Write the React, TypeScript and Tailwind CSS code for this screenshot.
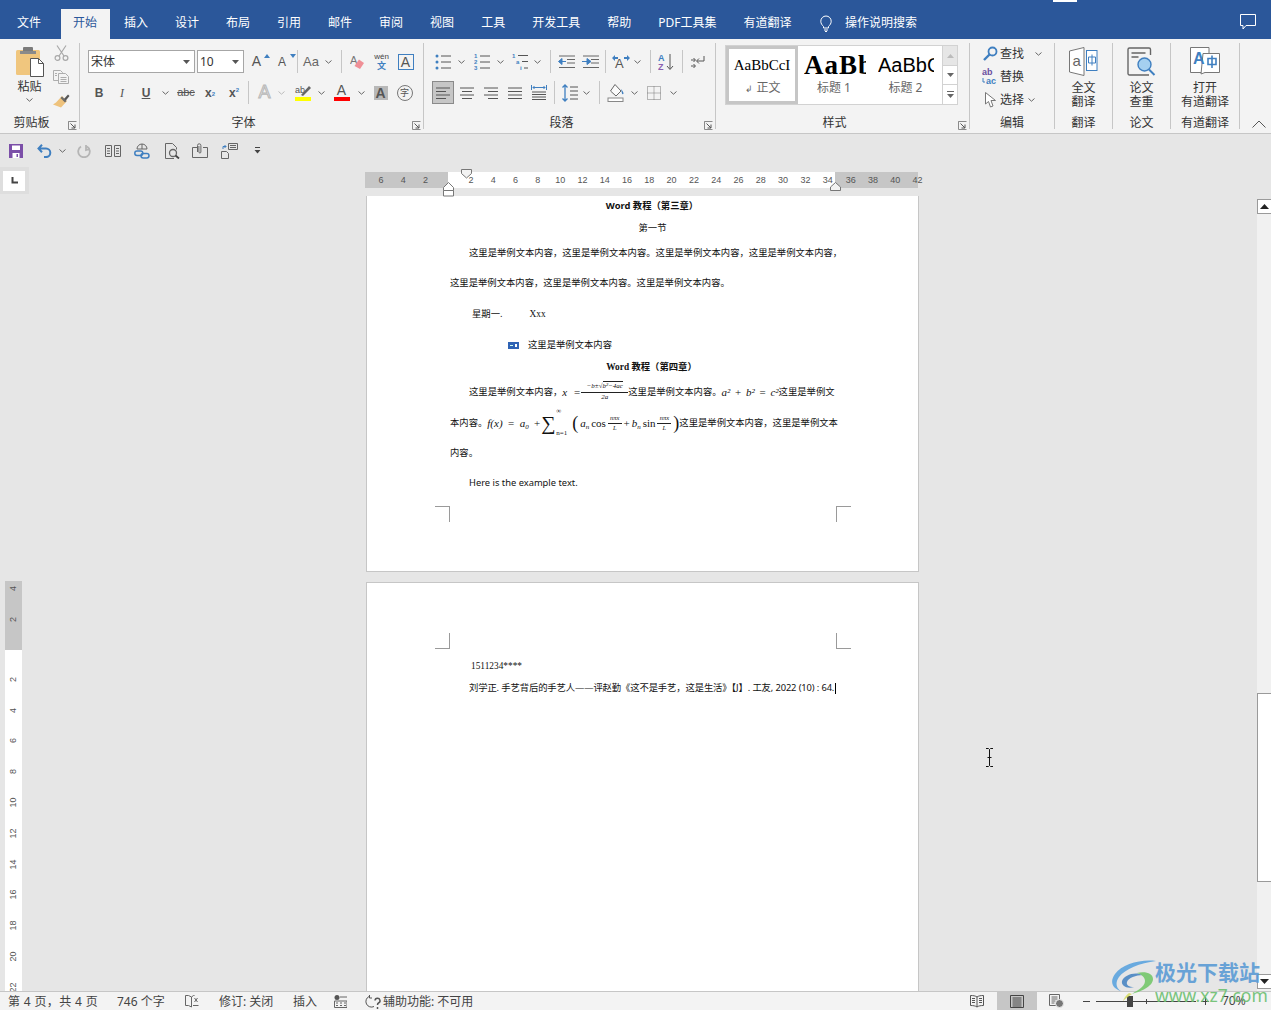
import React from "react";

const IB = "#3f7fc0";

function Chev({ w = 14, c = "#666" }: { w?: number; c?: string }) {
  return (
    <span className="flex items-center justify-center shrink-0" style={{ width: w }}>
      <svg className="shrink-0" width="7" height="4" viewBox="0 0 7 4"><path d="M.5.5 3.5 3.2 6.5.5" fill="none" stroke={c} strokeWidth="1" /></svg>
    </span>
  );
}
function Sep({ h = 23 }: { h?: number }) {
  return <span className="block w-px bg-[#c6c6c6] shrink-0" style={{ height: h }} />;
}
function Box({ w, children, className = "" }: { w: number; children?: React.ReactNode; className?: string }) {
  return <span className={"flex items-center justify-center shrink-0 h-[23px] " + className} style={{ width: w }}>{children}</span>;
}
function Launcher() {
  return (
    <svg className="absolute right-[2px] bottom-[-1px]" width="9" height="9" viewBox="0 0 9 9">
      <path d="M.5 5V.5H8.500M.5.5V8.500H8.500" fill="none" stroke="#8a8a8a" />
      <path d="M2.500 2.500 7 7M7 3.500V7H3.500" fill="none" stroke="#555" />
    </svg>
  );
}
function Group({ w, label, launcher, children }: { w: number; label: string; launcher?: boolean; children: React.ReactNode }) {
  return (
    <section className="relative flex flex-col h-[86px] border-r border-[#c6c6c6] shrink-0" style={{ width: w }}>
      <div className="flex-1 min-h-0">{children}</div>
      <div className={"h-[14px] mb-[-1px] leading-[14px] text-center text-[12px] text-[#333] " + (launcher ? "pr-[16px]" : "")}>{label}</div>
      {launcher && <Launcher />}
    </section>
  );
}
function Lines({ kind }: { kind: "l" | "c" | "r" | "j" | "d" }) {
  const rows: Record<string, string> = {
    l: "M1 3h14M1 6.500h10M1 10h14M1 13.500h10",
    c: "M1 3h14M3 6.500h10M1 10h14M3 13.500h10",
    r: "M1 3h14M5 6.500h10M1 10h14M5 13.500h10",
    j: "M1 3h14M1 6.500h14M1 10h14M1 13.500h14",
    d: "M1 7h14M1 9.500h14M1 12h14M1 14.500h14",
  };
  return (
    <svg width="16" height="16" viewBox="0 0 16 16">
      <path d={rows[kind]} stroke="#555" fill="none" />
      {kind === "d" && <path d="M.5 0v5M15.500 0v5M2 2.500h12M3.500 1 2 2.500 3.500 4M12.500 1 14 2.500 12.500 4" stroke={IB} fill="none" />}
    </svg>
  );
}

function Paste() {
  return (
    <svg width="30" height="31" viewBox="0 0 30 31">
      <rect x="1" y="4" width="24" height="25" rx="1.500" fill="#f0c67e" />
      <rect x="8" y="1" width="10" height="6" rx="1" fill="#7b7b7b" />
      <rect x="5" y="5" width="16" height="3" fill="#8a8a8a" />
      <path d="M15.500 12.500H23.500L28.500 17.500V30.500H15.500Z" fill="#fff" stroke="#555" />
      <path d="M23.500 12.500V17.500H28.500" fill="none" stroke="#555" />
    </svg>
  );
}
function Cut() {
  return (
    <svg width="15" height="16" viewBox="0 0 15 16" fill="none" stroke="#a8a8a8" strokeWidth="1.200">
      <path d="M3 .5 10 11M12 .5 5 11" />
      <circle cx="3.500" cy="13" r="2.400" /><circle cx="11.500" cy="13" r="2.400" />
    </svg>
  );
}
function CopyI() {
  return (
    <svg width="16" height="14" viewBox="0 0 16 14" fill="#f3f3f3" stroke="#adadad">
      <path d="M.5.5h7l2 2v8H.5z" /><path d="M5.500 3.500h7l3 3v7h-10z" />
      <path d="M7.500 7.500h6M7.500 9.500h6M7.500 11.500h6M2 3.500h2M2 5.500h2" />
    </svg>
  );
}
function Painter() {
  return (
    <svg width="17" height="15" viewBox="0 0 17 15">
      <path d="M9 3 14 8 8 14.500 0 11.500 3 9.500Z" fill="#eec27c" />
      <path d="M10 7 15 1.500 16.500 3 12 8.500Z" fill="#555" />
      <path d="M9 3.500 13.500 8 12 9.500 7.500 5Z" fill="#6d6d6d" />
    </svg>
  );
}
function List({ type }: { type: "b" | "n" | "m" }) {
  return (
    <svg width="16" height="18" viewBox="0 0 16 18">
      {type === "b" && (
        <g fill={IB}><circle cx="2" cy="3" r="1.500" /><circle cx="2" cy="9" r="1.500" /><circle cx="2" cy="15" r="1.500" /></g>
      )}
      {type === "n" && (
        <g fill={IB} fontSize="6" fontFamily="Liberation Sans" fontWeight="700"><text x="0" y="5">1</text><text x="0" y="11">2</text><text x="0" y="17">3</text></g>
      )}
      {type === "m" && (
        <g fill={IB} fontSize="6" fontFamily="Liberation Sans" fontWeight="700"><text x="0" y="5">1</text><text x="4" y="11">a</text><text x="8" y="17">i</text></g>
      )}
      {type === "m" ? (
        <path d="M6 2.500h10M10 8.500h6M12 15h4" stroke="#555" fill="none" />
      ) : (
        <path d="M6 3h10M6 9h10M6 15h10" stroke="#555" fill="none" />
      )}
    </svg>
  );
}
function Indent({ flip }: { flip?: boolean }) {
  return (
    <svg width="17" height="14" viewBox="0 0 17 14">
      <path d="M1 1h16M9 4.500h8M9 8h8M1 12.500h16" stroke="#666" />
      {flip ? <path d="M0 6.500h5V3.500L9 6.500 5 9.500V6.500" fill={IB} stroke={IB} /> : <path d="M8 6.500H4V3.500L0.500 6.500 4 9.500V6.500" fill={IB} stroke={IB} />}
    </svg>
  );
}
function Cursor() {
  return <svg width="7" height="19" viewBox="0 0 7 19"><path d="M0 .5h2.500L3.500 1.500 4.500.5H7M3.500 1.500V17.500M0 18.500h2.500L3.500 17.500 4.500 18.500H7M1.500 9.500H5.500" fill="none" stroke="#111" /></svg>;
}

const rulerCell = "w-[22.31px] shrink-0 text-center";
function Ruler() {
  const mid = [2, 4, 6, 8, 10, 12, 14, 16, 18, 20, 22, 24, 26, 28, 30, 32, 34];
  return (
    <div className="relative flex ml-[365px] mt-[4px] h-[16px] w-[553px] text-[9px] leading-[16px] text-[#555] font-['Liberation_Sans',sans-serif]">
      <div className="flex w-[83px] pl-[4.8px] bg-[#c6c6c6] shrink-0">
        {[6, 4, 2].map((n) => <span key={n} className={rulerCell}>{n}</span>)}
      </div>
      <div className="flex w-[387px] pl-[11.8px] bg-white shrink-0">
        {mid.map((n) => <span key={n} className={rulerCell}>{n}</span>)}
      </div>
      <div className="flex w-[83px] pl-[4.5px] bg-[#c6c6c6] shrink-0">
        {[36, 38, 40, 42].map((n) => <span key={n} className={rulerCell}>{n}</span>)}
      </div>
      <svg className="absolute left-[96px] top-[-3px]" width="12" height="10" viewBox="0 0 12 10"><path d="M.5.5h10v4L5.500 9 .5 4.500Z" fill="#f3f3f3" stroke="#777" /></svg>
      <svg className="absolute left-[78px] top-[10px]" width="12" height="15" viewBox="0 0 12 15"><path d="M.5 5.500 5.500.5l5 5v3h-10Z" fill="#fff" stroke="#777" /><path d="M.5 8.500h10v5.500H.5Z" fill="#fff" stroke="#777" /></svg>
      <svg className="absolute left-[465px] top-[10px]" width="12" height="9" viewBox="0 0 12 9"><path d="M.5 5 5.500.5l5 4.500v3.500H.5Z" fill="#f3f3f3" stroke="#777" /></svg>
    </div>
  );
}
function VRuler() {
  const ws = [2, 4, 6, 8, 10, 12, 14, 16, 18, 20, 22];
  const n = "h-[30.8px] shrink-0 flex items-center justify-center";
  const t = "block -rotate-90 text-[9px] leading-none";
  return (
    <div className="absolute left-[5px] top-[413px] w-[17px] h-[410px] overflow-hidden flex flex-col text-[#555] font-['Liberation_Sans',sans-serif]">
      <div className="h-[69px] bg-[#c6c6c6] shrink-0 flex flex-col items-center">
        <span className={t + " mt-[3px]"}>4</span>
        <span className={t + " mt-[22px]"}>2</span>
      </div>
      <div className="flex-1 bg-white flex flex-col pt-[14px]">
        {ws.map((v) => <span key={v} className={n}><span className={t}>{v}</span></span>)}
      </div>
    </div>
  );
}

function Frac({ n, d, w, s = "text-[6.500px]" }: { n: React.ReactNode; d: React.ReactNode; w: number; s?: string }) {
  return (
    <span className={"inline-flex flex-col items-center justify-center shrink-0 leading-none " + s} style={{ width: w }}>
      <span className="border-b border-[#222] w-full text-center pb-[2px] whitespace-nowrap">{n}</span>
      <span className="pt-[1px]">{d}</span>
    </span>
  );
}
const math = "font-['Liberation_Serif',serif] italic";

function Mark({ t }: { t: "tl" | "tr" | "bl" | "br" }) {
  const cls = {
    tl: "border-t border-r",
    tr: "border-t border-l",
    bl: "border-b border-r",
    br: "border-b border-l",
  }[t];
  return <span className={"block w-[15px] h-[16px] border-[#9a9a9a] " + cls} />;
}

export default function App() {
  const docLine = "h-[16px] leading-[16px] whitespace-nowrap flex items-center";
  return (
    <div className="relative w-[1271px] h-[1010px] overflow-hidden flex flex-col bg-[#e6e6e6] text-[12px] font-['Noto_Sans','Noto_Sans_CJK_SC',sans-serif]">
      {/* Title / tabs */}
      <header className="relative h-[39px] shrink-0 bg-[#2b579a] text-white flex items-end pl-[3.5px]">
        {[
          ["文件", ""],
          ["开始", "a"],
          ["插入", ""], ["设计", ""], ["布局", ""], ["引用", ""], ["邮件", ""], ["审阅", ""], ["视图", ""], ["工具", ""], ["开发工具", ""], ["帮助", ""], ["PDF工具集", ""], ["有道翻译", ""],
        ].map(([t, a]) =>
          a ? (
            <span key={t} className="ml-[6px] mr-px h-[30px] w-[49px] bg-[#f3f3f3] text-[#2b579a] text-center leading-[27px]">{t}</span>
          ) : (
            <span key={t} className="h-[30px] px-[13.5px] leading-[27px] whitespace-nowrap">{t}</span>
          )
        )}
        <svg className="ml-[15px] mb-[7px]" width="12" height="17" viewBox="0 0 12 17" fill="none" stroke="#fff"><path d="M3.500 11.500C2 10 .8 8.500.8 6.200a5.200 5.200 0 0 1 10.400 0C11.200 8.500 10 10 8.500 11.500V13h-5ZM4 15h4M5 16.500h2" /></svg>
        <span className="ml-[13px] h-[30px] leading-[27px]">操作说明搜索</span>
        <svg className="ml-[323px] mb-[8px]" width="17" height="17" viewBox="0 0 17 17" fill="none" stroke="#fff"><path d="M.5.5h15v11H6L3 15v-3.500H.5Z" /></svg>
        <span className="absolute left-[1053px] top-0 w-[24px] h-[2px] bg-white" />
      </header>

      {/* Ribbon */}
      <div className="h-[95px] shrink-0 bg-[#f3f3f3] border-b border-[#c6c6c6] flex pt-[4px] text-[#333]">
        <Group w={80} label="剪贴板" launcher>
          <div className="flex">
            <div className="w-[53px] flex flex-col items-center pl-[6px]">
              <span className="mt-[3px]"><Paste /></span>
              <span className="mt-[2px] leading-[16px]">粘贴</span>
              <span className="mt-[3px]"><Chev /></span>
            </div>
            <div className="flex flex-col items-center w-[16px] pt-[2px]">
              <Cut />
              <span className="mt-[9px]"><CopyI /></span>
              <span className="mt-[9px]"><Painter /></span>
            </div>
          </div>
        </Group>

        <Group w={344} label="字体" launcher>
          <div className="pt-[7px] pl-[8px] flex flex-col gap-[8px]">
            <div className="flex items-center h-[23px]">
              <span className="w-[107px] h-[23px] bg-white border border-[#a6a6a6] flex items-center justify-between pl-[2px] pr-[4px] shrink-0">宋体<svg width="7" height="4"><path d="M0 0h7L3.500 4Z" fill="#555" /></svg></span>
              <span className="ml-[2px] w-[47px] h-[23px] bg-white border border-[#a6a6a6] flex items-center justify-between pl-[2px] pr-[4px] shrink-0">10<svg width="7" height="4"><path d="M0 0h7L3.500 4Z" fill="#555" /></svg></span>
              <Box w={27} className="ml-[2px] pr-[6px] relative text-[14px] text-[#555] font-['Liberation_Sans',sans-serif]">A<svg className="absolute right-[3px] top-[4px]" width="6" height="4"><path d="M3 0 6 4H0Z" fill={IB} /></svg></Box>
              <Box w={24} className="pr-[6px] relative text-[12px] text-[#555] font-['Liberation_Sans',sans-serif]">A<svg className="absolute right-[1px] top-[4px]" width="6" height="4"><path d="M3 4 6 0H0Z" fill={IB} /></svg></Box>
              <Sep />
              <Box w={21} className="text-[#666] text-[13px] font-['Liberation_Sans',sans-serif] justify-end">Aa</Box>
              <span className="ml-[2px]"><Chev w={14} /></span>
              <span className="ml-[6px]"><Sep /></span>
              <Box w={31}>
                <svg width="16" height="16" viewBox="0 0 16 16"><text x="0" y="10" fontSize="11" fill="#777" fontFamily="Liberation Sans">A</text><path d="M9 5.500 14 9 10 15 4.500 12Z" fill="#ef8f96" /></svg>
              </Box>
              <Box w={17} className="flex-col leading-none">
                <span className="text-[8px] text-[#444] font-['Liberation_Sans',sans-serif]">wén</span>
                <span className="text-[9px] text-[#3f7fc0] font-bold">文</span>
              </Box>
              <Box w={31}>
                <span className="w-[16px] h-[16px] border border-[#3f7fc0] text-[#555] text-[14px] leading-[14px] text-center font-['Liberation_Sans',sans-serif]">A</span>
              </Box>
            </div>
            <div className="flex items-center h-[23px] text-[#555] font-['Liberation_Sans',sans-serif]">
              <Box w={22} className="font-bold">B</Box>
              <Box w={24} className="italic font-['Liberation_Serif',serif]">I</Box>
              <Box w={24} className="font-bold underline">U</Box>
              <Chev w={14} />
              <Box w={28} className="line-through text-[11px]">abc</Box>
              <Box w={20} className="font-bold">x<sub className="text-[6px] text-[#3f7fc0]">2</sub></Box>
              <Box w={28} className="font-bold">x<sup className="text-[6px] text-[#3f7fc0]">2</sup></Box>
              <Sep />
              <Box w={27} className="ml-[2px] text-[18px] text-[#ececec] [-webkit-text-stroke:1px_#b8b8b8]">A</Box>
              <Chev w={6} c="#bbb" />
              <Box w={33} className="ml-[2px]">
                <svg width="16" height="17" viewBox="0 0 16 17"><text x="0" y="9" fontSize="9" fill="#555" fontFamily="Liberation Sans">ab</text><path d="M6 11 14 2l2 2-8 8Z" fill="#666" /><rect y="13" width="16" height="4" fill="#ffff00" /></svg>
              </Box>
              <Chev w={4} />
              <Box w={37}>
                <span className="relative flex justify-center w-[16px] h-[17px] text-[14px] leading-[13px]">A<span className="absolute bottom-0 left-0 right-0 h-[4px] bg-[#ff0000]" /></span>
              </Box>
              <Chev w={2} />
              <Box w={37}>
                <span className="w-[14px] h-[14px] bg-[#b8b8b8] text-center text-[14px] leading-[14px] font-bold">A</span>
              </Box>
              <Box w={11}>
                <span className="w-[16px] h-[16px] shrink-0 rounded-full border border-[#777] text-[9px] leading-[14px] text-center font-['Noto_Sans_CJK_SC',sans-serif]">字</span>
              </Box>
            </div>
          </div>
        </Group>

        <Group w={292} label="段落" launcher>
          <div className="pt-[7px] pl-[8px] flex flex-col gap-[8px]">
            <div className="flex items-center h-[23px]">
              <Box w={22}><List type="b" /></Box>
              <Chev w={14} />
              <Box w={28}><List type="n" /></Box>
              <Chev w={8} />
              <Box w={32}><List type="m" /></Box>
              <Chev w={2} />
              <span className="ml-[12px]"><Sep /></span>
              <Box w={24} className="ml-[3px]"><Indent /></Box>
              <Box w={24}><Indent flip /></Box>
              <span className="ml-[3px]"><Sep /></span>
              <Box w={24} className="ml-[3px]">
                <svg width="18" height="15" viewBox="0 0 18 15"><text x="3" y="14" fontSize="13" fill="#555" fontFamily="Liberation Sans">A</text><path d="M0 4 3 1v2h3v2H3v2ZM18 4l-3-3v2h-3v2h3v2Z" fill={IB} /></svg>
              </Box>
              <Chev w={8} />
              <span className="ml-[9px]"><Sep /></span>
              <Box w={31}>
                <svg width="17" height="18" viewBox="0 0 17 18"><text x="0" y="8" fontSize="9" fontWeight="700" fill={IB} fontFamily="Liberation Sans">A</text><text x="0" y="17" fontSize="9" fontWeight="700" fill="#8a5fb0" fontFamily="Liberation Sans">Z</text><path d="M12 1v15M9 13l3 3.500 3-3.500" fill="none" stroke="#555" /></svg>
              </Box>
              <Sep />
              <Box w={30}>
                <svg width="14" height="14" viewBox="0 0 14 14" fill="none" stroke="#555"><path d="M13 1v5H6M8 3.500 5.500 6 8 8.500M0 5h4M2.500 3 4.500 5 2.500 7M0 11h4M2.500 9 4.500 11 2.500 13" /></svg>
              </Box>
            </div>
            <div className="flex items-center h-[23px]">
              <Box w={22} className="bg-[#c6c6c6] border border-[#8a8a8a]"><Lines kind="l" /></Box>
              <Box w={26}><Lines kind="c" /></Box>
              <Box w={22}><Lines kind="r" /></Box>
              <Box w={26}><Lines kind="j" /></Box>
              <Box w={22}><Lines kind="d" /></Box>
              <span className="ml-[4px]"><Sep /></span>
              <Box w={30}>
                <svg width="16" height="18" viewBox="0 0 16 18" fill="none"><path d="M8 3h8M8 7h8M8 11h8M8 15h8" stroke="#555" /><path d="M3 1v16M.5 3.500 3 1l2.500 2.500M.5 14.500 3 17l2.500-2.500" stroke={IB} strokeWidth="1.300" /></svg>
              </Box>
              <Chev w={2} />
              <span className="ml-[12px]"><Sep /></span>
              <Box w={31}>
                <svg width="17" height="18" viewBox="0 0 17 18"><path d="M8 .5 14 7l-5 5L3.500 7Z" fill="#fafafa" stroke="#666" /><path d="M14 5c1.500 2 2.500 3 2.500 4.500 0 1-1.500 1-1.500 0Z" fill={IB} /><rect x="1" y="14" width="15" height="3.500" fill="#fff" stroke="#888" /></svg>
              </Box>
              <Chev w={6} />
              <Box w={34}>
                <svg width="14" height="14" viewBox="0 0 14 14" fill="none" stroke="#777" strokeDasharray="1 1"><path d="M.5.5h13v13H.5ZM7 .5v13M.5 7h13" /></svg>
              </Box>
              <Chev w={4} />
            </div>
          </div>
        </Group>

        <Group w={254} label="样式" launcher>
          <div className="pt-[2px] pl-[9px]">
            <div className="flex w-[233px] h-[60px] bg-white border border-[#d2d2d2]">
              <div className="w-[72px] h-[58px] shrink-0 border-[3px] border-[#c6c6c6] flex flex-col items-center overflow-hidden">
                <span className="mt-[3px] h-[26px] leading-[26px] text-[15px] text-black font-['Liberation_Serif',serif] whitespace-nowrap">AaBbCcI</span>
                <span className="mt-[2px] ml-[2px] text-[#666] leading-[16px]"><span className="text-[9px]">↲</span> 正文</span>
              </div>
              <div className="w-[68px] shrink-0 flex flex-col items-center overflow-hidden pl-[6px]">
                <span className="mt-[3px] h-[32px] leading-[32px] w-full overflow-hidden text-[27px] font-bold tracking-[1px] text-black font-['Liberation_Serif',serif] whitespace-nowrap">AaBb</span>
                <span className="text-[#666] leading-[16px] mt-[-1px] mr-[2px]">标题 1</span>
              </div>
              <div className="w-[76px] shrink-0 flex flex-col items-center overflow-hidden pl-[12px] pr-[8px]">
                <span className="mt-[3px] h-[32px] leading-[32px] w-full overflow-hidden text-[20px] text-black font-['Liberation_Sans',sans-serif] whitespace-nowrap">AaBbCc</span>
                <span className="text-[#666] leading-[16px] mt-[-1px] mr-[1px]">标题 2</span>
              </div>
              <div className="w-[15px] shrink-0 border-l border-[#d2d2d2] flex flex-col">
                <span className="h-[20px] bg-[#e6e6e6] border-b border-[#d2d2d2] flex items-center justify-center"><svg width="7" height="4"><path d="M3.500 0 7 4H0Z" fill="#bbb" /></svg></span>
                <span className="h-[19px] border-b border-[#d2d2d2] flex items-center justify-center"><svg width="7" height="4"><path d="M0 0h7L3.500 4Z" fill="#666" /></svg></span>
                <span className="flex-1 flex items-center justify-center"><svg width="7" height="7"><path d="M0 .5h7" stroke="#666" /><path d="M0 3h7L3.500 7Z" fill="#666" /></svg></span>
              </div>
            </div>
          </div>
        </Group>

        <Group w={85} label="编辑">
          <div className="mt-[-1px] flex flex-col pl-[11px]">
            <div className="flex items-center h-[23px]">
              <Box w={18}><svg width="15" height="15" viewBox="0 0 15 15" fill="none" stroke={IB} strokeWidth="1.800"><circle cx="9.500" cy="5.500" r="4" /><path d="M6.500 8.500 1 14" strokeWidth="2.400" /></svg></Box>
              <span className="ml-[1px] text-[#333]">查找</span>
              <span className="ml-[7px]"><Chev /></span>
            </div>
            <div className="flex items-center h-[23px]">
              <Box w={18}><svg width="17" height="18" viewBox="0 0 17 18"><text x="0" y="7" fontSize="9" fontWeight="700" fill="#6b4fa0" fontFamily="Liberation Sans">ab</text><text x="4" y="16" fontSize="9" fontWeight="700" fill={IB} fontFamily="Liberation Sans">ac</text><path d="M1 10v4h2" fill="none" stroke={IB} /></svg></Box>
              <span className="ml-[1px] text-[#333]">替换</span>
            </div>
            <div className="flex items-center h-[23px]">
              <Box w={18}><svg width="11" height="16" viewBox="0 0 11 16"><path d="M.5.5V12L3.500 9.500 5.500 15 8 14 6 8.500h4.500Z" fill="#fff" stroke="#777" /></svg></Box>
              <span className="ml-[1px] text-[#333]">选择</span>
              <Chev />
            </div>
          </div>
        </Group>

        <Group w={58} label="翻译">
          <div className="flex flex-col items-center pt-[4px]">
            <svg width="29" height="29" viewBox="0 0 29 29" fill="none">
              <path d="M.5 4 15 .5V28.500L.5 25Z" fill="#fff" stroke="#777" />
              <text x="3.500" y="19" fontSize="15" fill="#666" fontFamily="Liberation Sans">a</text>
              <rect x="17.500" y="3.500" width="10.500" height="20" fill="#fff" stroke={IB} />
              <path d="M19.500 10h7v6h-7ZM23 7.500V18.500" stroke={IB} />
            </svg>
            <div className="mt-[5px] leading-[14px] text-center text-[#333]">全文<br />翻译</div>
          </div>
        </Group>
        <Group w={58} label="论文">
          <div className="flex flex-col items-center pt-[4px]">
            <svg width="29" height="29" viewBox="0 0 29 29" fill="none">
              <path d="M22 28H2.500A1.500 1.500 0 0 1 1 26.500V2.500A1.500 1.500 0 0 1 2.500 1H22a1.500 1.500 0 0 1 1.500 1.500V8" stroke="#666" strokeWidth="1.400" />
              <path d="M4.500 6h14M4.500 10h7" stroke="#666" strokeWidth="1.400" />
              <circle cx="17.500" cy="17.500" r="6.500" fill="#a5d0f0" stroke={IB} strokeWidth="1.400" />
              <path d="M22 22.500 27.500 28" stroke={IB} strokeWidth="2" />
            </svg>
            <div className="mt-[5px] leading-[14px] text-center text-[#333]">论文<br />查重</div>
          </div>
        </Group>
        <Group w={69} label="有道翻译">
          <div className="flex flex-col items-center pt-[4px]">
            <svg width="30" height="28" viewBox="0 0 30 28" fill="none">
              <path d="M15 25.500H.5V.5H19V6" fill="#fff" stroke="#777" />
              <path d="M13 6.500H29.500V25.500H15L11 27Z" fill="#fff" stroke="#777" />
              <text x="3" y="17" fontSize="16" fontWeight="700" fill={IB} fontFamily="Liberation Sans">A</text>
              <path d="M18 11.500h8v6h-8ZM22 8.500V21" stroke={IB} strokeWidth="1.600" />
            </svg>
            <div className="mt-[6px] leading-[14px] text-center text-[#333] whitespace-nowrap">打开<br />有道翻译</div>
          </div>
        </Group>
        <div className="flex-1 flex items-end justify-center pl-[6px] pb-[1px] h-[86px]">
          <svg width="14" height="8" viewBox="0 0 14 8"><path d="M.5 7.500 7 1l6.500 6.500" fill="none" stroke="#555" /></svg>
        </div>
      </div>

      {/* Quick access */}
      <div className="h-[34px] shrink-0 flex items-center pl-[9px] pb-[1px]">
        <svg width="14" height="14" viewBox="0 0 14 14"><path d="M0 0h14v14H0Z" fill="#7b4fa8" /><rect x="3" y="1.500" width="8" height="4.500" fill="#fff" /><rect x="3.500" y="9" width="7" height="5" fill="#fff" /><rect x="7.500" y="10" width="1.500" height="3" fill="#7b4fa8" /></svg>
        <svg className="ml-[14px]" width="15" height="14" viewBox="0 0 15 14" fill="none" stroke={IB} strokeWidth="2"><path d="M5 .8 1.500 4.500 5 8.200M2 4.500h7a4.300 4.300 0 0 1 0 8.600H7" /></svg>
        <span className="ml-[4px]"><Chev w={12} /></span>
        <svg className="ml-[9px]" width="14" height="14" viewBox="0 0 14 14" fill="none" stroke="#b5b5b5" strokeWidth="1.800"><path d="M9 1 9 6 13 5M10 2.500a5.800 5.800 0 1 1-6 0" /></svg>
        <svg className="ml-[14px]" width="16" height="12" viewBox="0 0 16 12" fill="none" stroke="#666"><path d="M.5.5h6v11h-6ZM9.500.5h6v11h-6ZM2 3.500h3M2 6h3M2 8.500h3M11 3.500h3M11 6h3M11 8.500h3" /></svg>
        <svg className="ml-[13px]" width="16" height="16" viewBox="0 0 16 16" fill="none"><path d="M3 6a5 5 0 0 1 10 0M8 1v5M3 6h10" stroke="#666" /><rect x=".8" y="8" width="8" height="4.500" rx="2.200" stroke={IB} strokeWidth="1.500" /><rect x="7" y="10.500" width="8" height="4.500" rx="2.200" stroke={IB} strokeWidth="1.500" /></svg>
        <svg className="ml-[15px]" width="15" height="16" viewBox="0 0 15 16" fill="none" stroke="#666"><path d="M9 15.500H.5V.5h7l4 4v2" /><circle cx="8" cy="10" r="3.500" strokeWidth="1.300" /><path d="M10.500 12.500 14 15.500" strokeWidth="1.800" stroke="#444" /></svg>
        <svg className="ml-[12px]" width="16" height="15" viewBox="0 0 16 15" fill="none" stroke="#666"><path d="M.5 4.500H5M11 4.500h4.500v10H.5v-10" /><path d="M5.500 9V2.500a1.700 1.700 0 0 1 3.400 0V9a1 1 0 0 1-2 0V3" /></svg>
        <svg className="ml-[13px]" width="17" height="16" viewBox="0 0 17 16" fill="none" stroke="#666"><path d="M7.500.5h9v6h-9ZM9 2.500h6M9 4.500h6" /><path d="M.5 8.500h5l2 2v5h-7Z" /><path d="M2 6V3.500h3M3.500 2 5 3.500 3.500 5" stroke={IB} /></svg>
        <svg className="ml-[16px]" width="7" height="7" viewBox="0 0 7 7"><path d="M1 .5h5" stroke="#444" /><path d="M.5 3h6L3.500 6.500Z" fill="#444" /></svg>
      </div>

      {/* Work area */}
      <main className="relative flex-1 min-h-0 flex">
        <div className="relative flex-1 min-w-0 flex flex-col overflow-hidden">
          <Ruler />
          <div className="mt-[8px] ml-[366px] w-[553px] flex flex-col text-[9.33px] text-[#111]">
            <article className="h-[376px] bg-white border border-t-0 border-[#c6c6c6] shrink-0 px-[83px] pt-[2px]">
              <p className={docLine + " justify-center pl-[19px] font-bold"}>Word 教程（第三章）</p>
              <p className={docLine + " justify-center pl-[20px] mt-[6px]"}>第一节</p>
              <p className={docLine + " mt-[9px] pl-[19px]"}>这里是举例文本内容，这里是举例文本内容。这里是举例文本内容，这里是举例文本内容，</p>
              <p className={docLine + " mt-[14px]"}>这里是举例文本内容，这里是举例文本内容。这里是举例文本内容。</p>
              <p className={docLine + " mt-[15px] pl-[22px]"}>星期一.<span className="ml-[27px] font-['Liberation_Serif',serif]">Xxx</span></p>
              <p className={docLine + " mt-[15px] pl-[58px]"}>
                <svg width="11" height="7" viewBox="0 0 11 7"><rect width="11" height="7" fill="#2f63b5" /><rect x="7" y="2" width="2" height="3" fill="#fff" /><rect x="2" y="3" width="3" height="1" fill="#cfe" /></svg>
                <span className="ml-[9px]">这里是举例文本内容</span>
              </p>
              <p className={docLine + " justify-center pl-[18px] mt-[6px] font-bold font-['Liberation_Serif','Noto_Sans_CJK_SC',serif]"}>Word 教程（第四章）</p>
              <p className={docLine + " mt-[9px] pl-[19px]"}>
                这里是举例文本内容，
                <span className={math + " flex justify-between w-[18px] shrink-0 text-[11px]"}><span>x</span><span className="not-italic">=</span></span>
                <span className="w-[1px] shrink-0" />
                <Frac w={47} s={math + " text-[7px]"} n={<span>−b±√<span className="border-t border-[#222]">b²−4ac</span></span>} d="2a" />
                这里是举例文本内容。
                <span className={math + " flex justify-between w-[57px] shrink-0 text-[11px]"}><span>a²</span><span className="not-italic">+</span><span>b²</span><span className="not-italic">=</span><span>c²</span></span>
                这里是举例文
              </p>
              <p className={docLine + " mt-[15px]"}>
                本内容。
                <span className={math + " flex justify-between items-center w-[53px] shrink-0 text-[11px] whitespace-nowrap"}><span>f(x)</span><span className="not-italic">=</span><span>a<sub className="text-[7px]">0</sub></span><span className="not-italic">+</span></span>
                <span className="relative ml-[1px] w-[31px] h-[16px] shrink-0 flex items-center font-['Liberation_Serif',serif]">
                  <span className="text-[20px] leading-[16px]">∑</span>
                  <span className="absolute left-[15px] top-[-7px] text-[7px] leading-none">∞</span>
                  <span className="absolute left-[15px] bottom-[-6px] text-[7px] leading-none">n=1</span>
                </span>
                <span className={math + " flex items-center justify-between w-[107px] shrink-0 text-[11px] whitespace-nowrap"}>
                  <span className="text-[18px] not-italic font-light leading-none">(</span>
                  <span>a<sub className="text-[7px]">n</sub></span>
                  <span className="not-italic">cos</span>
                  <Frac w={14} n="nπx" d="L" />
                  <span className="not-italic">+</span>
                  <span>b<sub className="text-[7px]">n</sub></span>
                  <span className="not-italic">sin</span>
                  <Frac w={14} n="nπx" d="L" />
                  <span className="text-[18px] not-italic font-light leading-none">)</span>
                </span>
                这里是举例文本内容，这里是举例文本
              </p>
              <p className={docLine + " mt-[14px]"}>内容。</p>
              <p className={docLine + " mt-[14px] pl-[19px]"}>Here is the example text.</p>
              <div className="flex justify-between mt-[15px] ml-[-15px] mr-[-16px]">
                <Mark t="tl" /><Mark t="tr" />
              </div>
            </article>
            <div className="h-[10px] shrink-0" />
            <article className="h-[421px] bg-white border border-b-0 border-[#c6c6c6] shrink-0 px-[83px] pt-[50px]">
              <div className="flex justify-between ml-[-15px] mr-[-16px]">
                <Mark t="bl" /><Mark t="br" />
              </div>
              <p className={docLine + " mt-[9px] pl-[21px] font-['Liberation_Serif',serif]"}>1511234****</p>
              <p className={docLine + " mt-[6px] pl-[19px]"}>
                <span className="tracking-[-0.12px]">刘学正. 手艺背后的手艺人——评赵勤《这不是手艺，这是生活》【J】. 工友, 2022 (10) : 64.</span>
                <span className="shrink-0 ml-[1px] w-px h-[11px] bg-black" />
              </p>
            </article>
          </div>
        </div>

        {/* scrollbar */}
        <aside className="w-[14px] shrink-0 flex flex-col">
          <div className="h-[31px] shrink-0" />
          <div className="flex-1 min-h-0 bg-[#f1f1f1] flex flex-col">
            <span className="h-[15px] shrink-0 bg-white border border-r-0 border-[#9a9a9a] flex items-center justify-center"><svg width="9" height="5"><path d="M4.500 0 9 5H0Z" fill="#222" /></svg></span>
            <span className="h-[479px] shrink-0" />
            <span className="h-[189px] shrink-0 bg-white border border-r-0 border-[#9a9a9a]" />
            <span className="h-[92px] shrink-0" />
            <span className="h-[15px] shrink-0 bg-white border border-r-0 border-[#9a9a9a] flex items-center justify-center"><svg width="9" height="5"><path d="M0 0h9L4.500 5Z" fill="#222" /></svg></span>
          </div>
        </aside>

        {/* top-left tab selector */}
        <div className="absolute left-0 top-[-1px] w-[29px] h-[27px] bg-[#dedede] flex items-center justify-center pr-[1px]">
          <span className="w-[22px] h-[20px] bg-white flex items-center justify-center">
            <svg width="7" height="7"><path d="M1.500 0v5.500H7" fill="none" stroke="#444" strokeWidth="2" /></svg>
          </span>
        </div>
        <VRuler />
        <span className="absolute left-[986px] top-[580px]"><Cursor /></span>
      </main>

      {/* Status bar */}
      <footer className="relative h-[19px] pt-[1px] shrink-0 bg-[#f3f3f3] border-t border-[#c6c6c6] flex items-center text-[12px] text-[#444] leading-[18px] whitespace-nowrap">
        <span className="ml-[8px] w-[109px] tracking-[0.35px]">第 4 页，共 4 页</span>
        <span className="w-[68px]">746 个字</span>
        <svg className="mr-[20px]" width="14" height="13" viewBox="0 0 14 13" fill="none" stroke="#666"><path d="M.5.5h3L6.500 2v10l-3-1.500h-3ZM6.500 2l2-1.500h1M8 10.500h5.500" /><path d="M9.500 3l3 4M12.500 3l-3 4" /></svg>
        <span className="w-[74px]">修订: 关闭</span>
        <span className="w-[41px]">插入</span>
        <svg className="mr-[18px]" width="13" height="13" viewBox="0 0 13 13"><circle cx="3" cy="2.500" r="2.500" fill="#555" /><path d="M6 2h7M.5 6h12.500v6.500H.5Z" fill="none" stroke="#666" /><path d="M2 8h2M6 8h2M10 8h2M2 10.500h2M6 10.500h2M10 10.500h2" stroke="#666" /></svg>
        <svg width="17" height="16" viewBox="0 0 17 16" fill="none" stroke="#555"><path d="M4 2.500a5.500 5.500 0 1 0 5 10" /><path d="M4.500 1v3H7" /><path d="M10 6.500a2.500 2.500 0 1 1 3.500 2.500c-1 .6-1 1-1 2" strokeWidth="1.500" /><path d="M12.500 13v2" strokeWidth="1.500" /></svg>
        <span className="ml-[1px]">辅助功能: 不可用</span>

        <div className="absolute right-0 top-0 bottom-0 flex items-center">
          <svg width="14" height="13" viewBox="0 0 14 13" fill="none" stroke="#555"><path d="M7 2C5.500.8 3 .5.500.5v10c2.500 0 5 .3 6.500 1.500 1.500-1.200 4-1.500 6.500-1.500V.5C11 .5 8.500.8 7 2ZM7 2v10M2 3.500h3M2 5.500h3M2 7.500h3M9 3.500h3M9 5.500h3M9 7.500h3" /></svg>
          <span className="ml-[13px] w-[40px] h-[18px] bg-[#c6c6c6] flex items-center justify-center">
            <svg width="14" height="13" viewBox="0 0 14 13" fill="none" stroke="#444"><path d="M.5.500h13v12H.5ZM2.500 3h9M2.500 5h9M2.500 7h9M2.500 9h9M2.500 11h9" /></svg>
          </span>
          <svg className="ml-[12px]" width="15" height="14" viewBox="0 0 15 14" fill="none" stroke="#666"><path d="M8 11.500H.5V.5h10v5M2.500 3h6M2.500 5h6M2.500 7h4M2.500 9h3" /><circle cx="10.500" cy="9.500" r="4" fill="#777" stroke="#eee" /></svg>
          <span className="ml-[19px] w-[7px] h-px bg-[#444]" />
          <span className="relative ml-[6px] w-[100px] h-px bg-[#444] block">
            <span className="absolute left-[31px] top-[-5px] w-[6px] h-[11px] bg-[#444]" />
            <span className="absolute left-[50px] top-[-2px] w-px h-[5px] bg-[#444]" />
          </span>
          <span className="relative ml-[5px] w-[8px] h-[8px] flex items-center justify-center">
            <span className="absolute w-[8px] h-px bg-[#444]" /><span className="absolute w-px h-[8px] bg-[#444]" />
          </span>
          <span className="ml-[13px] w-[49px]">70%</span>
        </div>
      </footer>

      {/* Watermark */}
      <div className="absolute left-[1111px] top-[958px] flex items-start pointer-events-none">
        <svg className="mt-[2px] shrink-0" width="46" height="42" viewBox="0 0 46 42" fill="none">
          <path d="M45 1C30-1 11 4 4 14c-6 8-2 15 6 17-5-3-6-8-2-14C14 9 29 3 45 1Z" fill="#5ba3de" opacity=".9" />
          <path d="M32 15C24 11 13 15 11 21c-1 5 5 8 12 6-5 0-8-2-7-5 1-4 9-7 16-7Z" fill="#3f7fc0" opacity=".85" />
          <path d="M26 13c8-2 16 0 16 6 0 8-14 13-21 15 4-3 13-7 13-13 0-4-4-7-8-8Z" fill="#74c66a" opacity=".9" />
          <path d="M21 34c-3 2-6 4-9 7 1-3 3-6 6-8Z" fill="#d7dd6a" opacity=".9" />
        </svg>
        <div className="flex flex-col ml-[-2px] font-['Noto_Sans_CJK_SC',sans-serif]">
          <span className="text-[21px] leading-[27px] font-bold text-[#5b9bd5] opacity-90 whitespace-nowrap">极光下载站</span>
          <span className="mt-[-1px] text-[17.500px] leading-[22px] text-[#6cc070] opacity-90 whitespace-nowrap font-['Noto_Sans',sans-serif]">www.xz7.com</span>
        </div>
      </div>
    </div>
  );
}
